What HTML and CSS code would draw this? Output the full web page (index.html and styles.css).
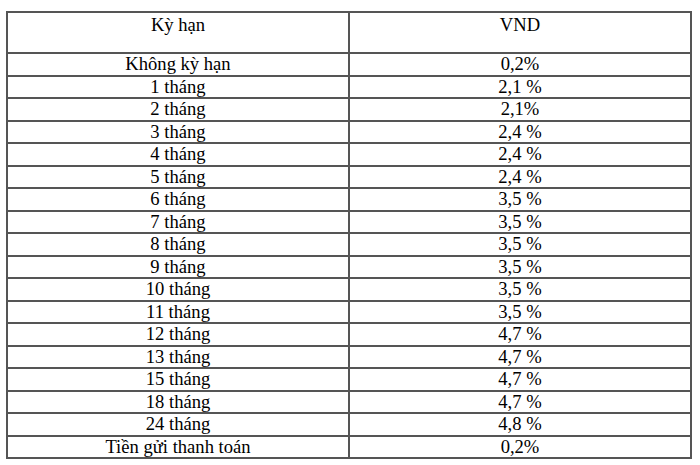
FILE: index.html
```html
<!DOCTYPE html>
<html lang="vi">
<head>
<meta charset="utf-8">
<link rel="stylesheet" href="styles.css">
</head>
<body>
<table class="rates">
  <thead>
    <tr class="head"><th>Kỳ hạn</th><th>VND</th></tr>
  </thead>
  <tbody>
    <tr><td>Không kỳ hạn</td><td>0,2%</td></tr>
    <tr><td>1 tháng</td><td>2,1 %</td></tr>
    <tr><td>2 tháng</td><td>2,1%</td></tr>
    <tr><td>3 tháng</td><td>2,4 %</td></tr>
    <tr><td>4 tháng</td><td>2,4 %</td></tr>
    <tr><td>5 tháng</td><td>2,4 %</td></tr>
    <tr><td>6 tháng</td><td>3,5 %</td></tr>
    <tr><td>7 tháng</td><td>3,5 %</td></tr>
    <tr><td>8 tháng</td><td>3,5 %</td></tr>
    <tr><td>9 tháng</td><td>3,5 %</td></tr>
    <tr><td>10 tháng</td><td>3,5 %</td></tr>
    <tr><td>11 tháng</td><td>3,5 %</td></tr>
    <tr><td>12 tháng</td><td>4,7 %</td></tr>
    <tr><td>13 tháng</td><td>4,7 %</td></tr>
    <tr><td>15 tháng</td><td>4,7 %</td></tr>
    <tr><td>18 tháng</td><td>4,7 %</td></tr>
    <tr><td>24 tháng</td><td>4,8 %</td></tr>
    <tr><td>Tiền gửi thanh toán</td><td>0,2%</td></tr>
  </tbody>
</table>
</body>
</html>
```
FILE: styles.css
```css
html, body {
  margin: 0;
  padding: 0;
  background: #ffffff;
}
body {
  padding: 11px 0 0 6px;
  font-family: "Liberation Serif", "Times New Roman", serif;
  color: #000000;
}
.rates {
  border-collapse: collapse;
  width: 686px;
  table-layout: fixed;
  font-size: 18.6px;
}
.rates th,
.rates td {
  border: 2px solid #555555;
  padding: 0;
  line-height: 20.5px;
  text-align: center;
  font-weight: normal;
  width: 50%;
}
.rates .head th {
  height: 37px;
  vertical-align: top;
  padding-top: 2px;
}
.rates tbody td {
  vertical-align: bottom;
}
```
